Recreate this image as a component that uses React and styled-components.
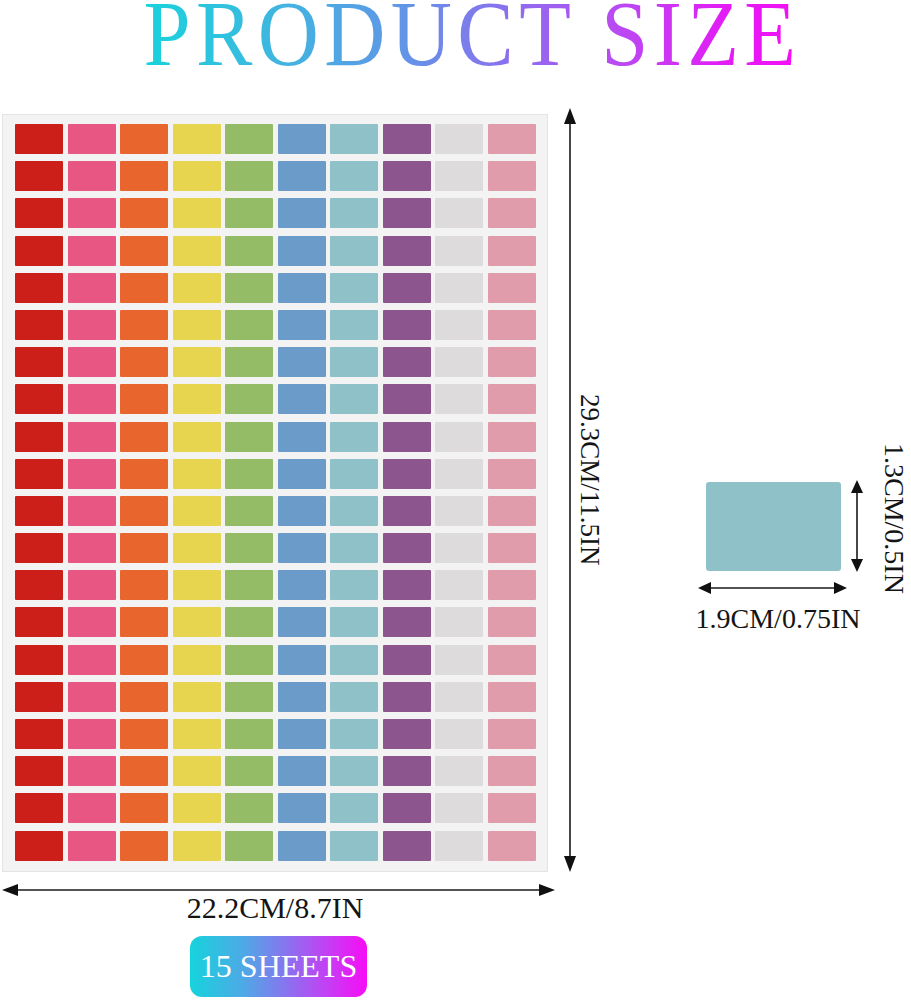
import React from 'react'
import styled, { createGlobalStyle } from 'styled-components'

const GlobalStyle = createGlobalStyle`
  html, body {
    margin: 0;
    padding: 0;
    background: #ffffff;
  }
  body {
    font-family: "Liberation Serif", "Times New Roman", serif;
    color: #141414;
  }
`

const COLORS = [
  '#cc1f1a',
  '#e85683',
  '#e8652d',
  '#e8d54f',
  '#94bc67',
  '#6a9bc9',
  '#8fc1c9',
  '#8c558d',
  '#dddbdc',
  '#e19cab',
]
const ROWS = 20

// double headed dimension arrow
function Arrow({ dir = 'h', length, head = 14, thick = 12 }) {
  const mid = thick / 2
  if (dir === 'v') {
    return (
      <ArrowSvg width={thick} height={length} viewBox={`0 0 ${thick} ${length}`}>
        <line x1={mid} y1={head - 2} x2={mid} y2={length - head + 2} stroke="#1a1a1a" strokeWidth="1.6" />
        <polygon points={`${mid},0 ${thick},${head} 0,${head}`} fill="#111" />
        <polygon points={`${mid},${length} ${thick},${length - head} 0,${length - head}`} fill="#111" />
      </ArrowSvg>
    )
  }
  return (
    <ArrowSvg width={length} height={thick} viewBox={`0 0 ${length} ${thick}`}>
      <line x1={head - 2} y1={mid} x2={length - head + 2} y2={mid} stroke="#1a1a1a" strokeWidth="1.6" />
      <polygon points={`0,${mid} ${head},0 ${head},${thick}`} fill="#111" />
      <polygon points={`${length},${mid} ${length - head},0 ${length - head},${thick}`} fill="#111" />
    </ArrowSvg>
  )
}

function App() {
  const cells = []
  for (let r = 0; r < ROWS; r++) {
    COLORS.forEach((c, i) => {
      cells.push(<Cell key={`${r}-${i}`} $color={c} />)
    })
  }

  return (
    <Page>
      <GlobalStyle />
      <Header>
        <Title>PRODUCT SIZE</Title>
      </Header>

      <Main>
        <LeftColumn>
          <SheetRow>
            <Sheet>
              <Grid>{cells}</Grid>
            </Sheet>
            <Arrow dir="v" length={764} head={16} />
            <SideLabel $size={27} $gap={2} $lift={20}>29.3CM/11.5IN</SideLabel>
          </SheetRow>

          <WidthBlock>
            <Arrow dir="h" length={553} head={16} />
            <DimLabel $size={30}>22.2CM/8.7IN</DimLabel>
            <Badge>15 SHEETS</Badge>
          </WidthBlock>
        </LeftColumn>

        <Detail>
          <Diagram>
            <StickerRow>
              <Sticker />
              <Arrow dir="v" length={92} head={13} />
            </StickerRow>
            <SmallArrow>
              <Arrow dir="h" length={149} head={13} />
            </SmallArrow>
            <DimLabel $size={28} $top={13} $shift={0}>1.9CM/0.75IN</DimLabel>
          </Diagram>
          <SideLabel $size={28} $gap={19} $lift={0} $start>1.3CM/0.5IN</SideLabel>
        </Detail>
      </Main>
    </Page>
  )
}

const Page = styled.div`
  width: 911px;
  height: 1000px;
  overflow: hidden;
  background: #fff;
`

const Header = styled.header`
  height: 108px;
  padding-left: 34px;
  text-align: center;
  box-sizing: border-box;
`

const Title = styled.h1`
  display: inline-block;
  margin: 0;
  padding: 0;
  font-family: "Liberation Serif", "Times New Roman", serif;
  font-weight: 400;
  font-size: 94px;
  line-height: 66px;
  letter-spacing: 6px;
  transform: scaleX(0.9);
  background: linear-gradient(
    90deg,
    #19d2dc 0%,
    #3fb6e0 20%,
    #5e98e6 38%,
    #8a70ee 55%,
    #b94af2 72%,
    #e21df5 88%,
    #f50ef5 100%
  );
  -webkit-background-clip: text;
  background-clip: text;
  color: transparent;
`

const Main = styled.main`
  display: flex;
  align-items: flex-start;
  padding: 0 5px 0 2px;
`

const LeftColumn = styled.div`
  display: flex;
  flex-direction: column;
`

const SheetRow = styled.div`
  display: flex;
  align-items: flex-start;
`

const Sheet = styled.div`
  box-sizing: border-box;
  width: 546px;
  height: 758px;
  margin: 6px 16px 0 0;
  padding: 9px 12px 0 12px;
  background: #f3f3f3;
  border: 1px solid #e4e4e4;
`

const Grid = styled.div`
  display: grid;
  grid-template-columns: repeat(10, 48px);
  grid-auto-rows: 30px;
  column-gap: 4.5px;
  row-gap: 7.2px;
`

const Cell = styled.div`
  background: ${(p) => p.$color};
  border-radius: 1px;
`

const ArrowSvg = styled.svg`
  display: block;
  flex-shrink: 0;
`

const SideLabel = styled.div`
  writing-mode: vertical-rl;
  align-self: ${(p) => (p.$start ? 'flex-start' : 'center')};
  margin-left: ${(p) => p.$gap}px;
  margin-bottom: ${(p) => p.$lift}px;
  font-size: ${(p) => p.$size}px;
  line-height: 24px;
  white-space: nowrap;
  color: #141414;
`

const WidthBlock = styled.div`
  width: 553px;
  margin-top: 12px;
  display: flex;
  flex-direction: column;
  align-items: center;
`

const DimLabel = styled.div`
  margin-top: ${(p) => p.$top || 0}px;
  margin-right: ${(p) => (p.$shift === undefined ? 7 : p.$shift)}px;
  font-size: ${(p) => p.$size}px;
  line-height: 24px;
  text-align: center;
  white-space: nowrap;
  color: #141414;
`

const Badge = styled.div`
  box-sizing: border-box;
  width: 177px;
  height: 61px;
  margin-top: 16px;
  border-radius: 12px;
  display: flex;
  align-items: center;
  justify-content: center;
  background: linear-gradient(90deg, #16d3dc 0%, #4ea9e6 30%, #8a72ef 55%, #c53ef4 78%, #f70cf6 100%);
  color: #ffffff;
  font-size: 32px;
  white-space: nowrap;
`

const Detail = styled.div`
  margin-left: auto;
  margin-top: 335px;
  display: flex;
  align-items: flex-start;
`

const Diagram = styled.div`
  width: 170px;
  margin-top: 37px;
  display: flex;
  flex-direction: column;
`

const StickerRow = styled.div`
  display: flex;
  align-items: center;
  gap: 10px;
  padding-left: 13px;
`

const Sticker = styled.div`
  width: 137px;
  height: 89px;
  background: #8fc1c9;
  border-radius: 3px;
`

const SmallArrow = styled.div`
  margin: 10px 0 0 5px;
`

export default App
